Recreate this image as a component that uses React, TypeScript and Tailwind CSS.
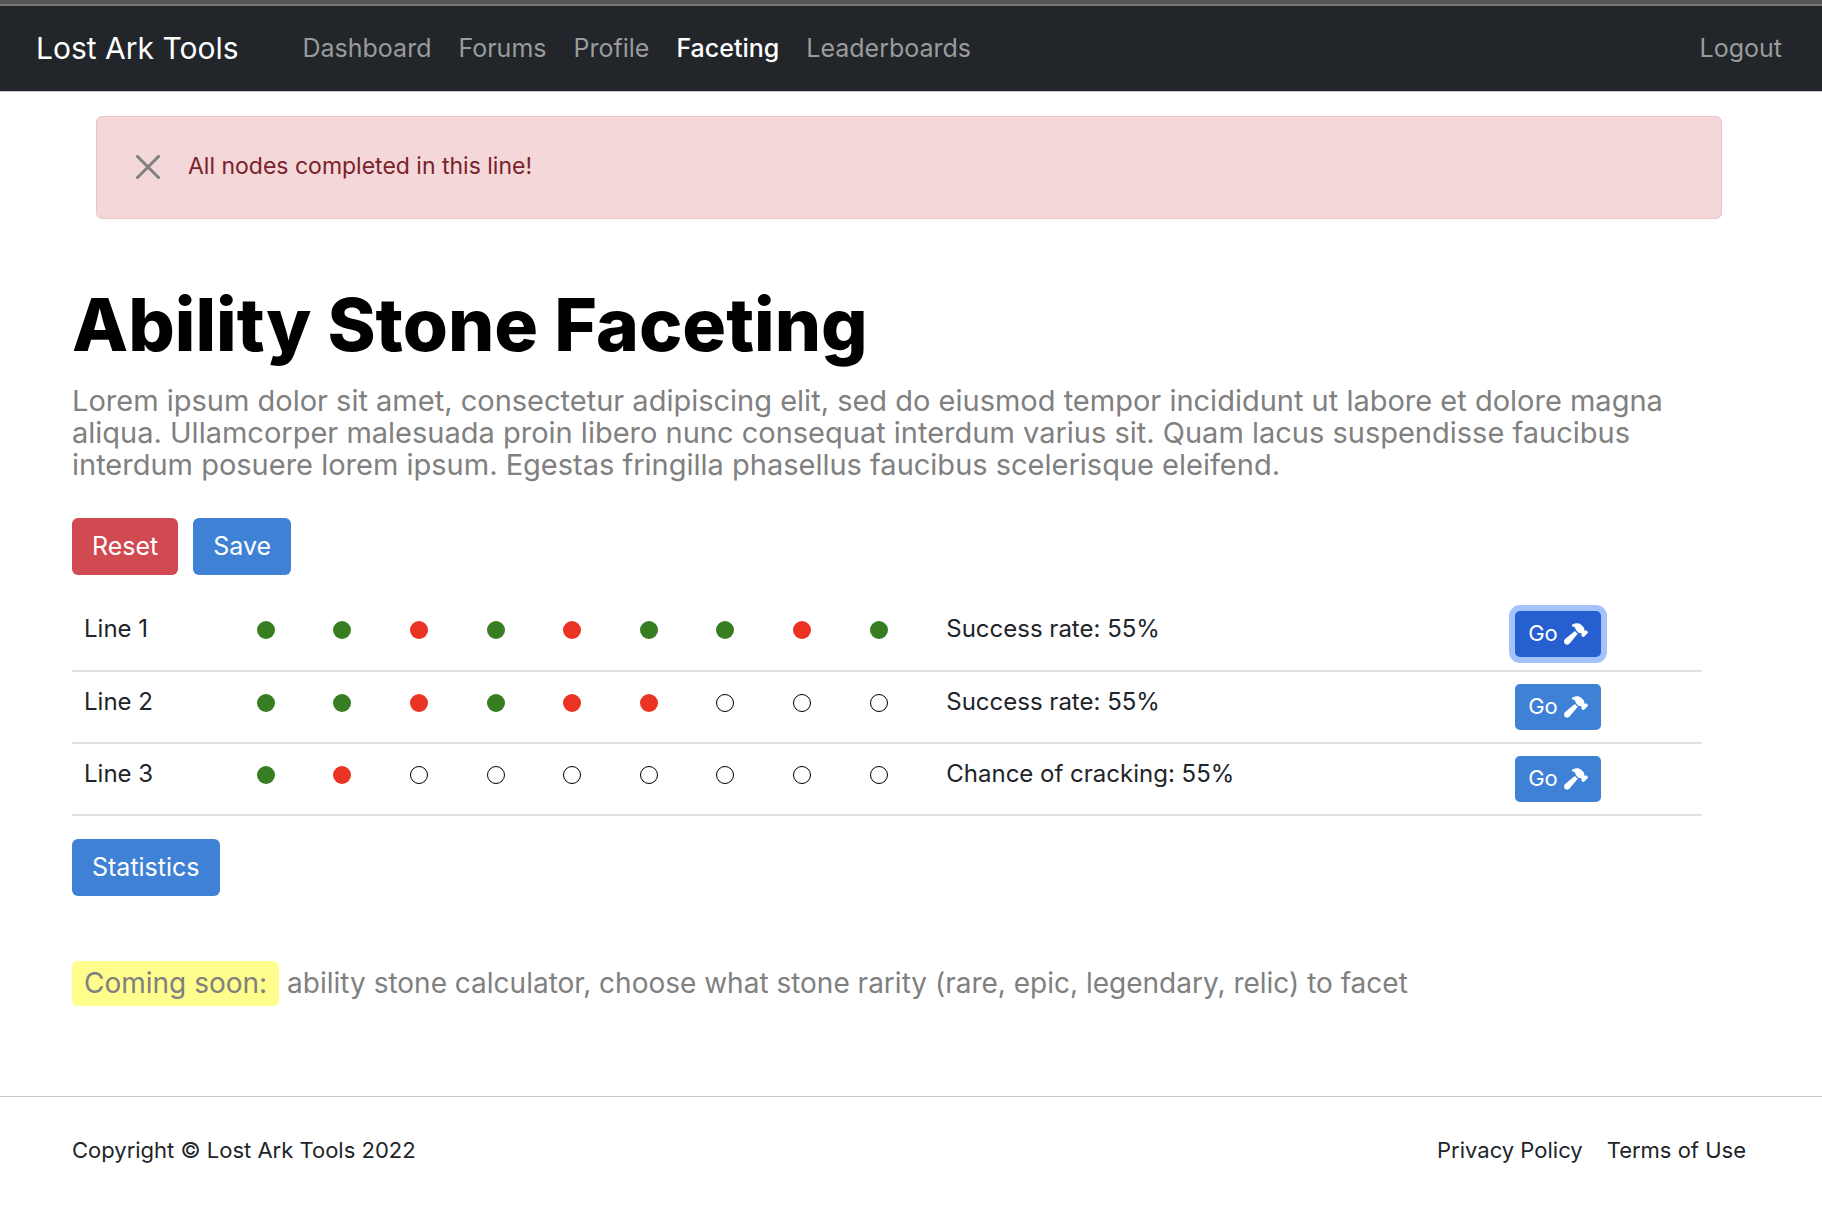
import React from "react";
import { FaHammer } from "react-icons/fa6";

type NodeState = "success" | "fail" | "empty";

interface Line {
  name: string;
  nodes: string;
  note: string;
  active?: boolean;
}

const lines: Line[] = [
  { name: "Line 1", nodes: "ssfsfssfs", note: "Success rate: 55%", active: true },
  { name: "Line 2", nodes: "ssfsff---", note: "Success rate: 55%" },
  { name: "Line 3", nodes: "sf-------", note: "Chance of cracking: 55%" },
];

const navItems = ["Dashboard", "Forums", "Profile", "Faceting", "Leaderboards"];

const nodeStyle: Record<NodeState, string> = {
  success: "bg-[#377e22]",
  fail: "bg-[#ea3323]",
  empty: "border border-black",
};

function toState(c: string): NodeState {
  return c === "s" ? "success" : c === "f" ? "fail" : "empty";
}

function StoneNode({ state }: { state: NodeState }) {
  return (
    <span
      role="img"
      aria-label={state}
      className={`block size-[18px] rounded-full ${nodeStyle[state]}`}
    />
  );
}

function Navbar() {
  return (
    <header className="border-t-4 border-[#555555]">
      <nav className="flex h-[88px] items-center border-t-2 border-b border-t-[#777777] border-b-[#c8c8c8] bg-[#22252a] pr-10 pl-9 text-[25px]">
        <a href="#" className="mr-[64px] text-[30px] text-white">
          Lost Ark Tools
        </a>
        <ul className="flex gap-[27px]">
          {navItems.map((item) => (
            <li key={item}>
              <a
                href="#"
                className={item === "Faceting" ? "font-medium text-white" : "text-[#9a9b9d]"}
              >
                {item}
              </a>
            </li>
          ))}
        </ul>
        <a href="#" className="ml-auto text-[#9a9b9d]">
          Logout
        </a>
      </nav>
    </header>
  );
}

function Alert() {
  return (
    <div
      role="alert"
      className="mr-[100px] ml-24 mt-6 flex h-[103px] items-center rounded-md border border-[#eec4c9] bg-[#f3d7d9] pb-0.5 pl-[39px] text-[23px] text-[#7a2129]"
    >
      <button type="button" aria-label="Dismiss" className="mr-7 text-[#808080]">
        <svg viewBox="0 0 24 24" className="size-6" fill="none" stroke="currentColor" strokeWidth="3" strokeLinecap="round">
          <path d="M1.5 1.5l21 21M22.5 1.5l-21 21" />
        </svg>
      </button>
      All nodes completed in this line!
    </div>
  );
}

function Button({ color, children }: { color: string; children: React.ReactNode }) {
  return (
    <button type="button" className={`h-[57px] rounded-md px-5 text-[25px] text-white ${color}`}>
      {children}
    </button>
  );
}

export default function App() {
  return (
    <div className="min-h-screen bg-white font-['Inter',sans-serif] text-[#212529]">
      <Navbar />
      <Alert />
      <main className="px-[72px] pt-16">
        <h1 className="text-[73px] leading-[84px] font-extrabold text-black">
          Ability Stone Faceting
        </h1>
        <p className="mt-[18px] mr-12 text-[29px] leading-8 text-[#808080]">
          Lorem ipsum dolor sit amet, consectetur adipiscing elit, sed do eiusmod tempor incididunt
          ut labore et dolore magna aliqua. Ullamcorper malesuada proin libero nunc consequat
          interdum varius sit. Quam lacus suspendisse faucibus interdum posuere lorem ipsum. Egestas
          fringilla phasellus faucibus scelerisque eleifend.
        </p>
        <div className="mt-[37px] flex gap-[15px]">
          <Button color="bg-[#d14a52]">Reset</Button>
          <Button color="bg-[#3e81d5]">Save</Button>
        </div>
        <div className="mt-6 pr-12">
          <table className="w-full table-fixed border-collapse text-2xl">
            <colgroup>
              <col className="w-[10.6%]" />
              {Array.from({ length: 9 }, (_, i) => (
                <col key={i} className="w-[4.7%]" />
              ))}
              <col />
              <col className="w-[12.2%]" />
            </colgroup>
            <tbody>
              {lines.map((line) => (
                <tr key={line.name} className="h-[72px] border-b-2 border-[#dee2e6]">
                  <th scope="row" className="px-3 pt-3.5 text-left align-top font-normal">
                    {line.name}
                  </th>
                  {line.nodes.split("").map((c, i) => (
                    <td key={i} className="px-3 pt-[22px] align-top">
                      <StoneNode state={toState(c)} />
                    </td>
                  ))}
                  <td className="px-3 pt-3.5 align-top">{line.note}</td>
                  <td className="px-3 pt-3 align-top">
                    <button
                      type="button"
                      className={
                        line.active
                          ? "flex h-[46px] items-center gap-1.5 rounded-[5px] bg-[#265fd0] px-[13px] text-[22px] text-white ring-6 ring-[#a4c2fb]"
                          : "flex h-[46px] items-center gap-1.5 rounded-[5px] bg-[#3e81d5] px-[13px] text-[22px] text-white"
                      }
                    >
                      Go <FaHammer className="text-[24px]" />
                    </button>
                  </td>
                </tr>
              ))}
            </tbody>
          </table>
        </div>
        <div className="mt-[23px]">
          <Button color="bg-[#3e81d5]">Statistics</Button>
        </div>
        <p className="mt-[65px] flex items-center gap-2 text-[28px] leading-[45px] text-[#808080]">
          <mark className="rounded-md bg-[#fffd8c] px-3 text-[#808080]">Coming soon:</mark>
          ability stone calculator, choose what stone rarity (rare, epic, legendary, relic) to facet
        </p>
      </main>
      <footer className="mt-[90px] flex justify-between border-t border-[#c8c8c8] pt-[37px] pr-[76px] pl-[72px] text-[22px] leading-8">
        <p>Copyright © Lost Ark Tools 2022</p>
        <div className="flex gap-6">
          <a href="#">Privacy Policy</a>
          <a href="#">Terms of Use</a>
        </div>
      </footer>
    </div>
  );
}
